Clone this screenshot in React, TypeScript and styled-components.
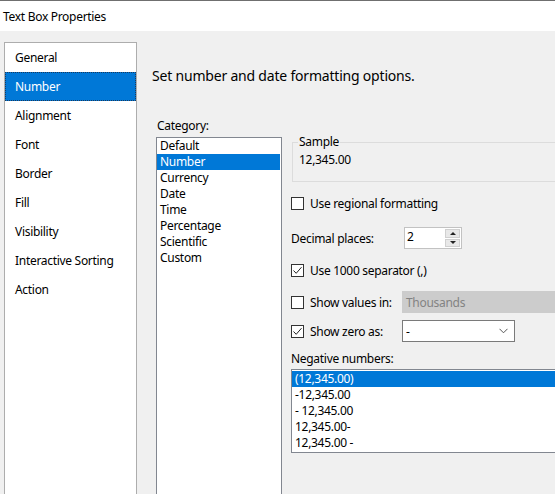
import styled, { createGlobalStyle } from "styled-components";

const GlobalStyle = createGlobalStyle`
  html, body {
    margin: 0;
    padding: 0;
    background: #f0f0f0;
  }
  body {
    font-family: "Noto Sans", "Liberation Sans", sans-serif;
    font-size: 12px;
    letter-spacing: -0.3px;
    color: #000;
  }
`;

const Window = styled.div`
  width: 555px;
  height: 494px;
  overflow: hidden;
  display: flex;
  flex-direction: column;
  background: #f0f0f0;
`;

const TitleBar = styled.div`
  height: 30px;
  flex-shrink: 0;
  border-top: 1px solid #6f6f6f;
  background: #fff;
  display: flex;
  align-items: center;
  padding-left: 3px;
  font-size: 12px;
`;

const Body = styled.div`
  display: flex;
  padding: 11px 0 0 4px;
  flex: 1;
`;

const NavPanel = styled.div`
  width: 131px;
  height: 500px;
  flex-shrink: 0;
  border: 1px solid #adadad;
  background: #fff;
  display: flex;
  flex-direction: column;
`;

const NavItem = styled.div<{ $active?: boolean }>`
  height: 29px;
  box-sizing: border-box;
  display: flex;
  align-items: center;
  padding-left: 9px;
  background: ${(p) => (p.$active ? "#0078d7" : "transparent")};
  color: ${(p) => (p.$active ? "#fff" : "#000")};
  border: 1px dotted ${(p) => (p.$active ? "#1b3a5c" : "transparent")};
`;

const Content = styled.div`
  flex: 1;
  padding-left: 15px;
  display: flex;
  flex-direction: column;
`;

const Heading = styled.div`
  font-size: 14px;
  letter-spacing: -0.2px;
  line-height: 20px;
  margin-top: 24px;
`;

const Columns = styled.div`
  display: flex;
  margin-top: 32px;
  margin-left: 4px;
`;

const LeftCol = styled.div`
  width: 126px;
  flex-shrink: 0;
  display: flex;
  flex-direction: column;
`;

const FieldLabel = styled.div`
  line-height: 16px;
  padding-left: 1px;
`;

const ListBox = styled.div<{ $height: number }>`
  margin-top: 3px;
  height: ${(p) => p.$height}px;
  box-sizing: border-box;
  border: 1px solid #828790;
  background: #fff;
  padding: 0;
  display: flex;
  flex-direction: column;
`;

const ListItem = styled.div<{ $active?: boolean }>`
  height: 16px;
  line-height: 16px;
  padding-left: 3px;
  margin-right: 1px;
  white-space: nowrap;
  background: ${(p) => (p.$active ? "#0078d7" : "transparent")};
  color: ${(p) => (p.$active ? "#fff" : "#000")};
`;

const RightCol = styled.div`
  flex: 1;
  margin-left: 9px;
  display: flex;
  flex-direction: column;
  margin-top: 16px;
  min-width: 300px;
`;

const Group = styled.fieldset`
  margin: 0 0 0 1px;
  padding: 2px 5px 13px 5px;
  border: 1px solid #dcdcdc;
  border-right: none;
  min-width: 0;
`;

const GroupLegend = styled.legend`
  padding: 0 1px;
  line-height: 16px;
`;

const SampleText = styled.div`
  line-height: 16px;
  padding-left: 1px;
`;

const Row = styled.div<{ $top: number; $height?: number }>`
  display: flex;
  align-items: center;
  margin-top: ${(p) => p.$top}px;
  height: ${(p) => p.$height ?? 16}px;
  white-space: nowrap;
`;

const RowLabel = styled.div<{ $width: number }>`
  width: ${(p) => p.$width}px;
  flex-shrink: 0;
  display: flex;
  align-items: center;
`;

const Box = styled.span`
  width: 13px;
  height: 13px;
  box-sizing: border-box;
  border: 1px solid #333;
  background: #fff;
  display: inline-flex;
  align-items: center;
  justify-content: center;
  margin-right: 6px;
  flex-shrink: 0;
`;

const SpinBox = styled.div`
  width: 58px;
  height: 22px;
  box-sizing: border-box;
  border: 1px solid #c2c2c2;
  background: #fff;
  display: flex;
  align-items: stretch;
`;

const SpinValue = styled.div`
  flex: 1;
  padding-left: 2px;
  line-height: 18px;
`;

const SpinButtons = styled.div`
  width: 15px;
  margin: 1px;
  display: flex;
  flex-direction: column;
  gap: 1px;
`;

const SpinButton = styled.div`
  flex: 1;
  background: #e8e8e8;
  border: 1px solid #d0d0d0;
  display: flex;
  align-items: center;
  justify-content: center;
`;

const Arrow = styled.span<{ $up?: boolean }>`
  width: 0;
  height: 0;
  border-left: 3px solid transparent;
  border-right: 3px solid transparent;
  ${(p) => (p.$up ? "border-bottom: 3px solid #222;" : "border-top: 3px solid #222;")}
`;

const Select = styled.div<{ $disabled?: boolean; $width?: number }>`
  width: ${(p) => (p.$width ? `${p.$width}px` : "auto")};
  flex: ${(p) => (p.$width ? "none" : "1")};
  height: 22px;
  box-sizing: border-box;
  border: 1px solid ${(p) => (p.$disabled ? "#cccccc" : "#7a7a7a")};
  background: ${(p) => (p.$disabled ? "#cccccc" : "#fff")};
  color: ${(p) => (p.$disabled ? "#838383" : "#000")};
  display: flex;
  align-items: center;
  justify-content: space-between;
  padding: 0 6px 0 3px;
`;

function Check() {
  return (
    <svg width="11" height="11" viewBox="0 0 11 11">
      <path d="M1.5 5.5 L4.2 8.3 L9.5 2.2" fill="none" stroke="#222" strokeWidth="1" />
    </svg>
  );
}

function Chevron() {
  return (
    <svg width="9" height="6" viewBox="0 0 9 6">
      <path d="M0.5 0.8 L4.5 4.8 L8.5 0.8" fill="none" stroke="#555" strokeWidth="1" />
    </svg>
  );
}

function CheckBox({ checked }: { checked?: boolean }) {
  return <Box>{checked && <Check />}</Box>;
}

export default function App() {
  const pages = [
    "General",
    "Number",
    "Alignment",
    "Font",
    "Border",
    "Fill",
    "Visibility",
    "Interactive Sorting",
    "Action",
  ];
  const categories = [
    "Default",
    "Number",
    "Currency",
    "Date",
    "Time",
    "Percentage",
    "Scientific",
    "Custom",
  ];
  const negatives = [
    "(12,345.00)",
    "-12,345.00",
    "- 12,345.00",
    "12,345.00-",
    "12,345.00 -",
  ];

  return (
    <Window>
      <GlobalStyle />
      <TitleBar>Text Box Properties</TitleBar>
      <Body>
        <NavPanel>
          {pages.map((p) => (
            <NavItem key={p} $active={p === "Number"}>
              {p}
            </NavItem>
          ))}
        </NavPanel>
        <Content>
          <Heading>Set number and date formatting options.</Heading>
          <Columns>
            <LeftCol>
              <FieldLabel>Category:</FieldLabel>
              <ListBox $height={400}>
                {categories.map((c) => (
                  <ListItem key={c} $active={c === "Number"}>
                    {c}
                  </ListItem>
                ))}
              </ListBox>
            </LeftCol>
            <RightCol>
              <Group>
                <GroupLegend>Sample</GroupLegend>
                <SampleText>12,345.00</SampleText>
              </Group>
              <Row $top={13}>
                <CheckBox />
                Use regional formatting
              </Row>
              <Row $top={16} $height={22}>
                <RowLabel $width={113}>Decimal places:</RowLabel>
                <SpinBox>
                  <SpinValue>2</SpinValue>
                  <SpinButtons>
                    <SpinButton>
                      <Arrow $up />
                    </SpinButton>
                    <SpinButton>
                      <Arrow />
                    </SpinButton>
                  </SpinButtons>
                </SpinBox>
              </Row>
              <Row $top={13}>
                <CheckBox checked />
                Use 1000 separator (,)
              </Row>
              <Row $top={13} $height={22}>
                <RowLabel $width={111}>
                  <CheckBox />
                  Show values in:
                </RowLabel>
                <Select $disabled>Thousands</Select>
              </Row>
              <Row $top={7} $height={22}>
                <RowLabel $width={111}>
                  <CheckBox checked />
                  Show zero as:
                </RowLabel>
                <Select $width={113}>
                  -
                  <Chevron />
                </Select>
              </Row>
              <Row $top={8}>Negative numbers:</Row>
              <ListBox $height={84}>
                <div style={{ height: 1 }} />
                {negatives.map((n, i) => (
                  <ListItem key={n} $active={i === 0}>
                    {n}
                  </ListItem>
                ))}
              </ListBox>
            </RightCol>
          </Columns>
        </Content>
      </Body>
    </Window>
  );
}
